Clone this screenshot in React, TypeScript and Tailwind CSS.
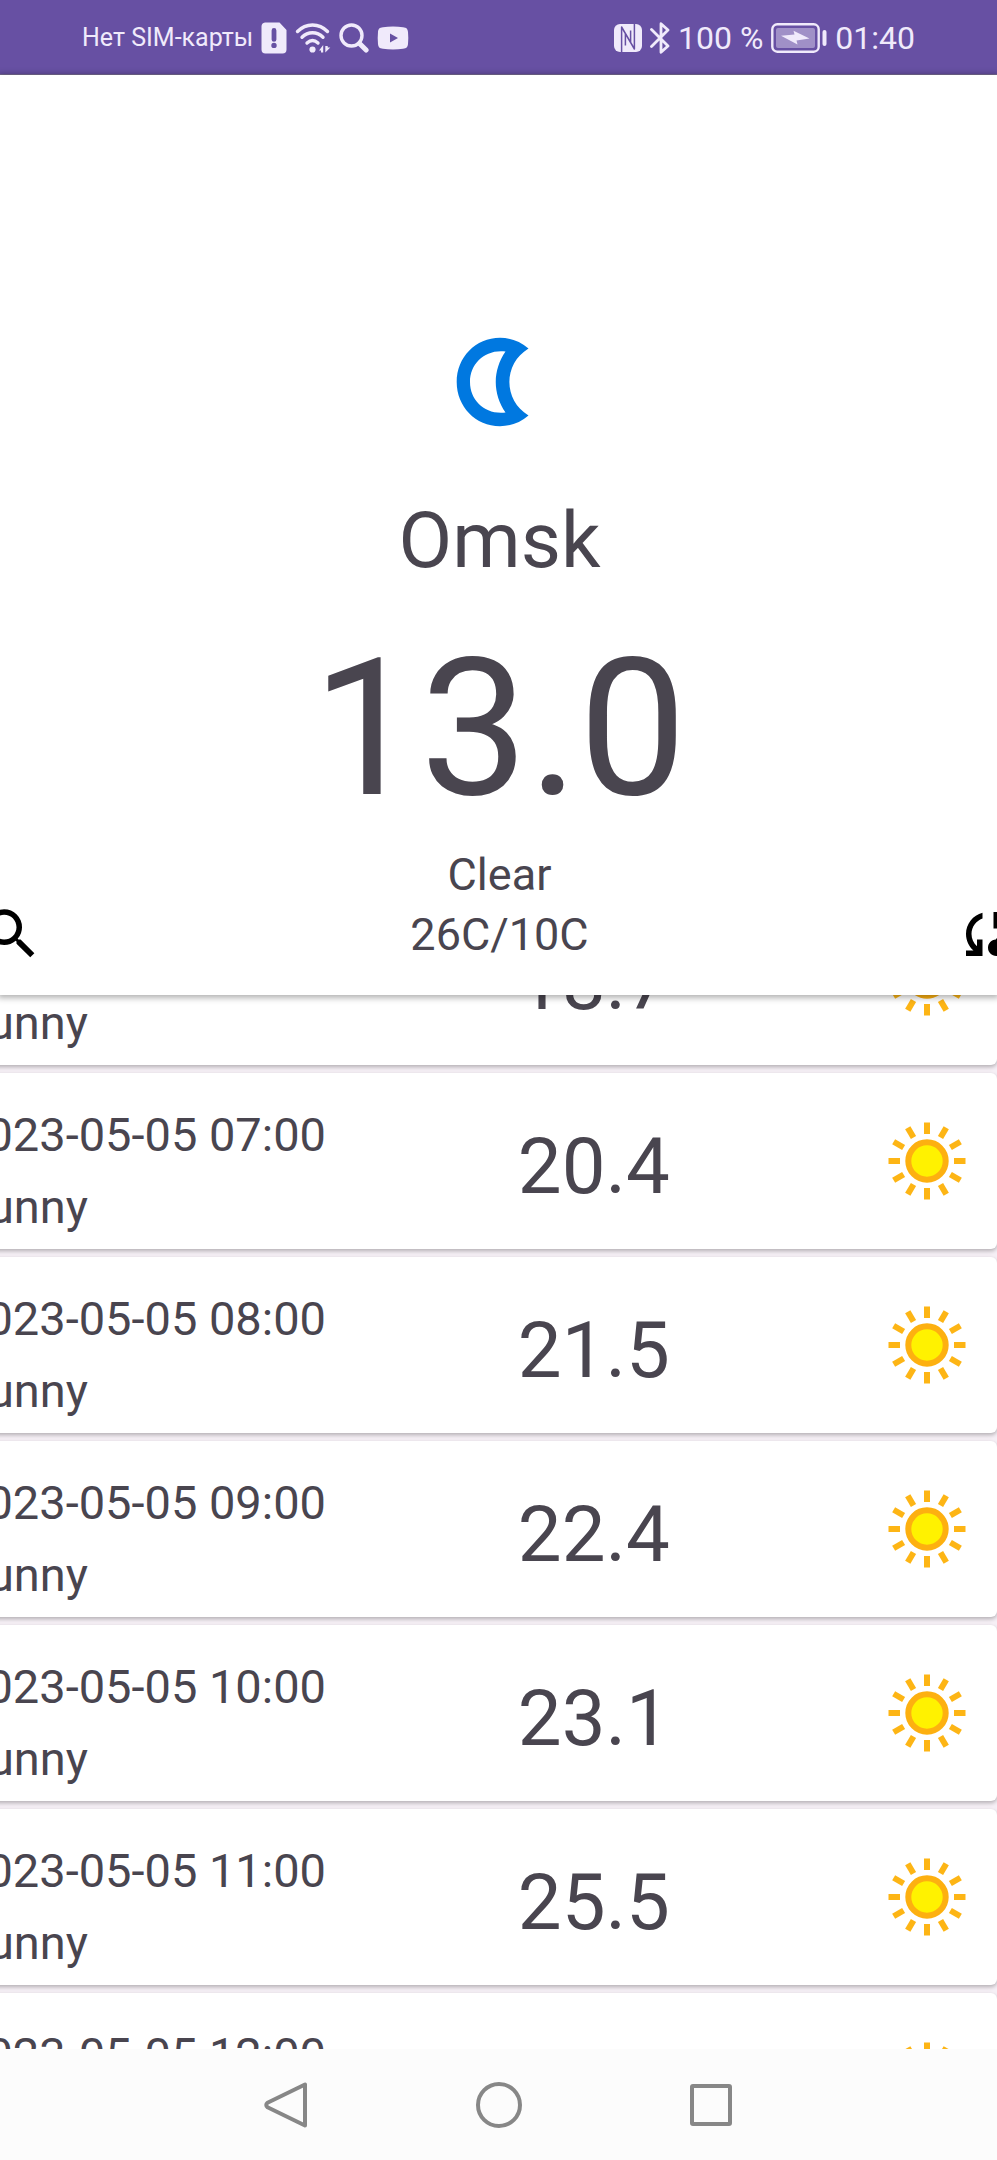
import type { ReactNode } from "react";

type Hour = { time: string; condition: string; temp: string };

const hours: Hour[] = [
  { time: "2023-05-05 06:00", condition: "Sunny", temp: "18.7" },
  { time: "2023-05-05 07:00", condition: "Sunny", temp: "20.4" },
  { time: "2023-05-05 08:00", condition: "Sunny", temp: "21.5" },
  { time: "2023-05-05 09:00", condition: "Sunny", temp: "22.4" },
  { time: "2023-05-05 10:00", condition: "Sunny", temp: "23.1" },
  { time: "2023-05-05 11:00", condition: "Sunny", temp: "25.5" },
  { time: "2023-05-05 12:00", condition: "Sunny", temp: "26.0" },
];

const rays = [0, 30, 60, 90, 120, 150, 180, 210, 240, 270, 300, 330];

function SimAlertIcon() {
  return (
    <svg className="h-8 w-[26px]" viewBox="0 0 26 32" aria-hidden="true">
      <path
        fill="currentColor"
        fillRule="evenodd"
        d="M4 .5h14.5L25.500 8v19.500a4 4 0 0 1-4 4H4.500a4 4 0 0 1-4-4v-23a4 4 0 0 1 3.500-4ZM13 6a2.400 2.400 0 0 0-2.400 2.400v9a2.400 2.400 0 0 0 4.800 0v-9A2.400 2.400 0 0 0 13 6Zm0 14.700a2.700 2.700 0 1 0 0 5.400 2.700 2.700 0 0 0 0-5.400Z"
      />
    </svg>
  );
}

function WifiIcon() {
  return (
    <svg className="h-8 w-9" viewBox="0 0 36 32" fill="none" stroke="currentColor" strokeWidth="3.400" strokeLinecap="round" aria-hidden="true">
      <path d="M2.500 9.500C11 .8 24 .8 32.500 9.500M7 15.200c6-6 15-6 21 0M12 21c3.500-3.200 7.500-3.200 11 0" />
      <circle cx="17.500" cy="27.500" r="3.100" fill="currentColor" stroke="none" />
      <path d="M28.200 30.500V23L24 28.500h2v2ZM30.300 24v6.500l5-5h-2.600V24Z" fill="currentColor" stroke="none" />
    </svg>
  );
}

function StatusSearchIcon() {
  return (
    <svg className="h-[30px] w-[30px]" viewBox="0 0 30 30" fill="none" stroke="currentColor" aria-hidden="true">
      <circle cx="12.500" cy="12.500" r="10.500" strokeWidth="3.400" />
      <path d="m20.500 20.500 6.600 6.600" strokeWidth="5" strokeLinecap="round" />
    </svg>
  );
}

function VideoIcon() {
  return (
    <svg className="h-6 w-8" viewBox="0 0 32 24" aria-hidden="true">
      <path
        fill="currentColor"
        fillRule="evenodd"
        d="M6 1.200C12 .4 20 .4 26 1.200c3.500.4 4.700 1.600 5 4.800.4 4 .4 8 0 12-.3 3.200-1.500 4.400-5 4.800-6 .8-14 .8-20 0-3.500-.4-4.700-1.600-5-4.800-.4-4-.4-8 0-12 .3-3.200 1.500-4.400 5-4.800ZM13 7.600v8.800l8-4.400Z"
      />
    </svg>
  );
}

function NfcIcon() {
  return (
    <svg className="h-7 w-7" viewBox="0 0 28 28" aria-hidden="true">
      <rect width="28" height="28" rx="6" fill="currentColor" />
      <path
        d="M7.600 28V3l9 15.500V6.500M20.400 0v25l-9-15.500v12"
        fill="none"
        stroke="#6750a3"
        strokeWidth="1.500"
        strokeLinejoin="round"
      />
    </svg>
  );
}

function BluetoothIcon() {
  return (
    <svg className="h-8 w-5" viewBox="0 0 20 32" fill="none" stroke="currentColor" strokeWidth="2.800" strokeLinejoin="round" strokeLinecap="round" aria-hidden="true">
      <path d="M1.500 7.500 18 24l-7 6.300V1.700L18 8 1.500 24.500" />
    </svg>
  );
}

function BatteryIcon() {
  return (
    <svg className="h-[30px] w-14" viewBox="0 0 56 30" aria-hidden="true">
      <rect x="1.300" y="1.300" width="46.400" height="27.400" rx="5" fill="none" stroke="currentColor" strokeWidth="2.400" />
      <rect x="5" y="5" width="39" height="20" rx="2" fill="currentColor" opacity=".42" />
      <path fill="currentColor" d="M10 12.800 23.500 11.500 22.500 7.800 38.500 15.500 25.500 17.500 26.500 21.500Z" />
      <rect x="51.500" y="7" width="4" height="16" rx="2" fill="currentColor" />
    </svg>
  );
}

function MoonIcon() {
  return (
    <svg className="h-[90px] w-[88px]" viewBox="0 0 88 90" role="img" aria-label="Clear night">
      <path
        fill="#0078e0"
        fillRule="evenodd"
        d="M44 .8c10.500 0 20.500 3.600 28.500 10.700C47 27 47 63 72.500 78.500 64.500 85.600 54.500 89.200 44 89.200 19.500 89.200.7 69.500.7 45S19.500.8 44 .8ZM49.500 14.500C29 12 14 26.500 14 45s15 33 35.500 30.500C36.500 56.500 36.500 33.500 49.500 14.500Z"
      />
    </svg>
  );
}

function SunIcon() {
  return (
    <svg className="size-20" viewBox="-40 -40 80 80" role="img" aria-label="Sunny">
      {rays.map((angle) => (
        <rect key={angle} x="-3" y="-38.500" width="6" height="11.500" fill="#fdb515" transform={`rotate(${angle})`} />
      ))}
      <circle r="18.700" fill="#fff200" stroke="#fdb010" strokeWidth="6" />
    </svg>
  );
}

function IconButton({ label, d, className }: { label: string; d: string; className: string }) {
  return (
    <button type="button" aria-label={label} className={`shrink-0 text-black ${className}`}>
      <svg className="size-[66px]" viewBox="0 0 24 24" fill="currentColor" aria-hidden="true">
        <path d={d} />
      </svg>
    </button>
  );
}

function NavButton({ label, children }: { label: string; children: ReactNode }) {
  return (
    <button type="button" aria-label={label} className="text-[#878787]">
      <svg className="size-12" viewBox="0 0 48 48" fill="none" stroke="currentColor" strokeWidth="4" strokeLinejoin="round" aria-hidden="true">
        {children}
      </svg>
    </button>
  );
}

function HourCard({ hour }: { hour: Hour }) {
  return (
    <li className="grid h-44 shrink-0 grid-cols-[55%_1fr_auto] items-center rounded-md bg-white pr-[30px] pl-4 shadow-[0_2px_4px_rgba(0,0,0,0.28)]">
      <div className="flex flex-col gap-3 pt-5 text-[47px] leading-[60px] whitespace-nowrap">
        <span>{hour.time}</span>
        <span>{hour.condition}</span>
      </div>
      <span className="pt-3 pl-1 text-[78px] leading-none">{hour.temp}</span>
      <SunIcon />
    </li>
  );
}

export default function App() {
  return (
    <div className="flex h-screen flex-col overflow-hidden bg-white font-[Roboto,'Noto_Sans',sans-serif] text-[#49454f]">
      <div className="flex h-[75px] shrink-0 items-center justify-between border-b border-[#7a6e96] bg-[#6750a3] pt-0.5 pr-[82px] pl-[82px] text-[#f0eafb]">
        <div className="flex items-center gap-2">
          <span className="text-[25px] leading-8 whitespace-nowrap">Нет SIM-карты</span>
          <SimAlertIcon />
          <WifiIcon />
          <StatusSearchIcon />
          <VideoIcon />
        </div>
        <div className="flex items-center gap-2 text-[32px] leading-8 whitespace-nowrap">
          <NfcIcon />
          <BluetoothIcon />
          <span>100 %</span>
          <BatteryIcon />
          <span>01:40</span>
        </div>
      </div>

      <header className="relative z-10 flex shrink-0 items-end justify-between bg-white pt-[262px] pb-7 shadow-[0_1px_6px_2px_rgba(0,0,0,0.3)]">
        <IconButton
          label="Search"
          className="-ml-[22px]"
          d="M15.500 14h-.79l-.28-.27A6.471 6.471 0 0 0 16 9.500 6.500 6.500 0 1 0 9.500 16c1.610 0 3.090-.59 4.230-1.570l.27.28v.79l5 4.990L20.490 19l-4.990-5zm-6 0C7.010 14 5 11.990 5 9.500S7.010 5 9.500 5 14 7.010 14 9.500 11.990 14 9.500 14z"
        />
        <div className="flex flex-col items-center pb-0.5">
          <MoonIcon />
          <h1 className="mt-[66px] text-[78px] leading-[96px]">Omsk</h1>
          <p className="mt-11 text-[192px] leading-[192px]">13.0</p>
          <p className="mt-5 text-[45px] leading-[60px]">Clear</p>
          <p className="text-[45px] leading-[60px]">26C/10C</p>
        </div>
        <IconButton
          label="Sync"
          className="-mr-6"
          d="M21.500 14.980c-.02 0-.03 0-.05.01C21.200 13.300 19.760 12 18 12c-1.400 0-2.600.83-3.160 2.020C13.260 14.100 12 15.400 12 17c0 1.660 1.340 3 3 3l6.500-.02c1.380 0 2.500-1.120 2.500-2.500s-1.120-2.500-2.500-2.500zM10 4.260v2.090C7.670 7.180 6 9.390 6 12c0 1.770.78 3.340 2 4.440V14h2v6H4v-2h2.730C5.060 16.540 4 14.400 4 12c0-3.730 2.550-6.850 6-7.740zM20 6h-2.730c1.430 1.260 2.410 3.010 2.660 5h-2.020C17.680 9.640 16.980 8.450 16 7.560V10h-2V4h6v2z"
        />
      </header>

      <main className="min-h-0 flex-1 overflow-hidden bg-[#f6f0f6]">
        <ul className="-mt-[106px] -ml-14 flex flex-col gap-2">
          {hours.map((hour) => (
            <HourCard key={hour.time} hour={hour} />
          ))}
        </ul>
      </main>

      <nav className="flex h-[111px] shrink-0 items-center justify-center gap-[164px] bg-[#fcfcfc]">
        <NavButton label="Back">
          <path d="M42 3.500v41L4.500 26.200q-2.500-2.200 0-4.400Z" />
        </NavButton>
        <NavButton label="Home">
          <circle cx="24" cy="24" r="21" />
        </NavButton>
        <NavButton label="Recent apps">
          <rect x="5" y="5" width="38" height="38" rx="1" />
        </NavButton>
      </nav>
    </div>
  );
}
